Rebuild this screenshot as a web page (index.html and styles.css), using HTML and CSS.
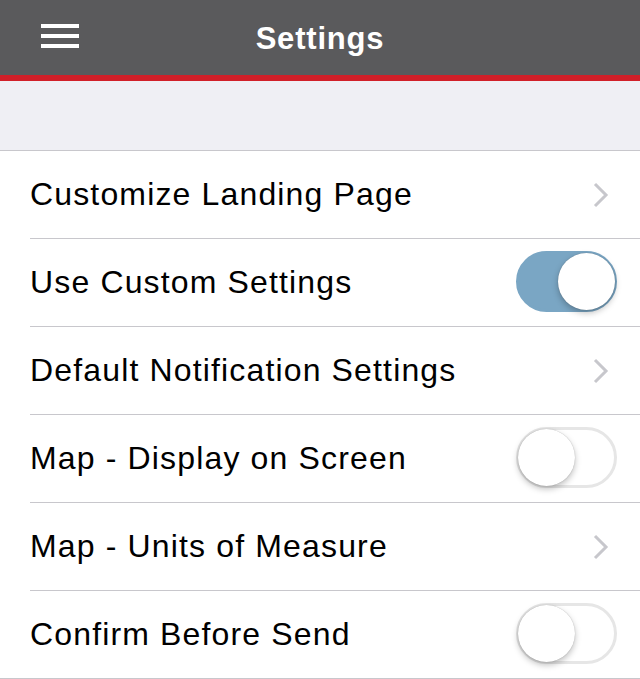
FILE: index.html
```html
<!DOCTYPE html>
<html>
<head>
<meta charset="utf-8">
<link rel="stylesheet" href="styles.css">
</head>
<body>
<header class="topbar">
  <div class="menu"><span></span><span></span><span></span></div>
  <h1 class="title">Settings</h1>
</header>
<div class="spacer"></div>
<ul class="list">
  <li class="row"><span class="label">Customize Landing Page</span>
    <svg class="chev" width="16" height="26" viewBox="0 0 16 26"><path d="M2 2 L13 13 L2 24" fill="none" stroke="#c7c7cc" stroke-width="3"/></svg></li>
  <li class="row"><span class="label">Use Custom Settings</span><span class="toggle on"><span class="knob"></span></span></li>
  <li class="row"><span class="label">Default Notification Settings</span>
    <svg class="chev" width="16" height="26" viewBox="0 0 16 26"><path d="M2 2 L13 13 L2 24" fill="none" stroke="#c7c7cc" stroke-width="3"/></svg></li>
  <li class="row"><span class="label">Map - Display on Screen</span><span class="toggle"><span class="knob"></span></span></li>
  <li class="row"><span class="label">Map - Units of Measure</span>
    <svg class="chev" width="16" height="26" viewBox="0 0 16 26"><path d="M2 2 L13 13 L2 24" fill="none" stroke="#c7c7cc" stroke-width="3"/></svg></li>
  <li class="row last"><span class="label">Confirm Before Send</span><span class="toggle"><span class="knob"></span></span></li>
</ul>
</body>
</html>
```
FILE: styles.css
```css
* { box-sizing: border-box; }
html, body { margin: 0; padding: 0; background: #fff; }
body { font-family: "Liberation Sans", Arial, sans-serif; width: 640px; overflow: hidden; }
.topbar {
  height: 81px;
  background: #5a5a5c;
  border-bottom: 6px solid #d11f28;
  position: relative;
  display: flex;
  align-items: center;
  justify-content: center;
}
.title {
  margin: 0;
  color: #fff;
  font-size: 31px;
  font-weight: bold;
  letter-spacing: 0.8px;
  line-height: 1;
  margin-top: 1px;
}
.menu {
  position: absolute;
  left: 41px;
  top: 24px;
  width: 38px;
  display: flex;
  flex-direction: column;
  gap: 6px;
}
.menu span { display: block; height: 4px; background: #fff; }
.spacer {
  height: 70px;
  background: #efeff4;
  border-bottom: 1px solid #c8c7cc;
}
.list { list-style: none; margin: 0; padding: 0 0 0 30px; }
.row {
  height: 88px;
  border-bottom: 1px solid #c8c7cc;
  display: flex;
  align-items: center;
  justify-content: space-between;
  padding-right: 22px;
}
.row.last { margin-left: -30px; padding-left: 30px; }
.label {
  font-size: 32px;
  letter-spacing: 1.15px;
  color: #000;
  margin-top: -1px;
}
.chev { margin-right: 9px; }
.toggle {
  width: 101px;
  height: 61px;
  border-radius: 31px;
  border: 3px solid #e6e6e6;
  background: #fff;
  position: relative;
  margin-right: 1px;
  margin-top: -2px;
}
.toggle.on { background: #7aa6c4; border-color: #7aa6c4; }
.knob {
  position: absolute;
  top: -1px;
  left: -1px;
  width: 57px;
  height: 57px;
  border-radius: 50%;
  background: #fff;
  box-shadow: 0 3px 6px rgba(0,0,0,0.25), 0 0 1px rgba(0,0,0,0.3);
}
.toggle.on .knob { left: auto; right: -1px; }
```
